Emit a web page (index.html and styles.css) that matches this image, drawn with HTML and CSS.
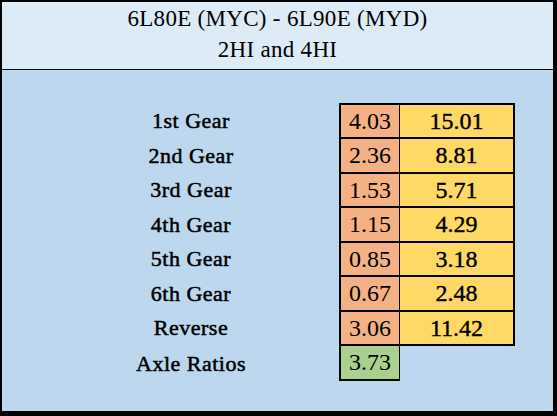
FILE: index.html
```html
<!DOCTYPE html>
<html>
<head>
<meta charset="utf-8">
<link rel="stylesheet" href="styles.css">
</head>
<body>
<div class="sheet">
  <div class="header">
    <div class="title">6L80E (MYC) - 6L90E (MYD)</div>
    <div class="title">2HI and 4HI</div>
  </div>
  <div class="body">
    <div class="grid">
      <div class="label">1st Gear</div><div class="c1">4.03</div><div class="c2">15.01</div>
      <div class="label">2nd Gear</div><div class="c1">2.36</div><div class="c2">8.81</div>
      <div class="label">3rd Gear</div><div class="c1">1.53</div><div class="c2">5.71</div>
      <div class="label">4th Gear</div><div class="c1">1.15</div><div class="c2">4.29</div>
      <div class="label">5th Gear</div><div class="c1">0.85</div><div class="c2">3.18</div>
      <div class="label">6th Gear</div><div class="c1">0.67</div><div class="c2">2.48</div>
      <div class="label">Reverse</div><div class="c1">3.06</div><div class="c2">11.42</div>
      <div class="label">Axle Ratios</div><div class="c1 axle">3.73</div><div class="empty"></div>
    </div>
  </div>
</div>
</body>
</html>
```
FILE: styles.css
```css
html, body {
  margin: 0;
  padding: 0;
  background: #000;
}
.sheet {
  box-sizing: border-box;
  width: 557px;
  height: 416px;
  border-style: solid;
  border-color: #000;
  border-width: 2px 4px 5px 2px;
  background: #BDD7EE;
  display: flex;
  flex-direction: column;
  font-family: "Liberation Serif", "DejaVu Serif", serif;
  color: #000;
}
.header {
  box-sizing: border-box;
  height: 68px;
  padding-top: 1px;
  background: #DDEBF7;
  border-bottom: 1px solid #000;
}
.title {
  font-size: 23px;
  line-height: 31px;
  letter-spacing: 0.3px;
  text-align: center;
}
.body {
  padding-top: 33px;
  padding-left: 41px;
}
.grid {
  display: grid;
  grid-template-columns: 296px 61px 115px;
  grid-template-rows: 34px 35px 34px 35px 34px 35px 34px 37px;
}
.grid > div {
  box-sizing: border-box;
  display: flex;
  align-items: center;
  justify-content: center;
}
.label {
  font-size: 22px;
  letter-spacing: 0.5px;
  -webkit-text-stroke: 0.5px #000;
  padding-top: 2px;
}
.c1 {
  background: #F4B183;
  border-left: 2px solid #000;
  border-top: 2px solid #000;
  border-right: 1px solid #000;
  font-size: 24px;
}
.c2 {
  background: #FFD966;
  border-top: 2px solid #000;
  border-right: 2px solid #000;
  font-size: 24px;
  -webkit-text-stroke: 0.4px #000;
}
.c1.axle {
  background: #A9D08E;
  border-bottom: 2px solid #000;
}
.empty {
  border-top: 2px solid #000;
}
```
